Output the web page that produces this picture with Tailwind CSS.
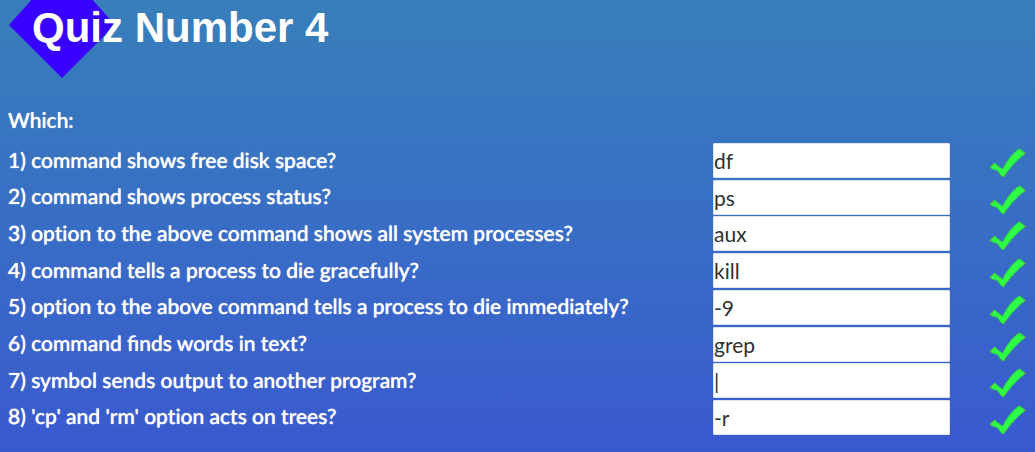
<!DOCTYPE html>
<html lang="en">
<head>
<meta charset="utf-8">
<meta name="viewport" content="width=device-width, initial-scale=1">
<title>Quiz Number 4</title>
<script src="https://cdn.jsdelivr.net/npm/@tailwindcss/browser@4"></script>
</head>
<body class="min-h-screen overflow-x-hidden bg-linear-to-b from-[#387fba] to-[#3a59cf] font-['Lato',sans-serif] text-[21px] leading-7 font-medium text-white">
<svg width="0" height="0" class="absolute" aria-hidden="true">
  <symbol id="check" viewBox="0 0 38 30">
    <path d="M1 19.500 5.500 15 13.500 21.500C18 12.500 23.500 5.500 30.500.8L36.500 5.500C28 11.500 21.500 19 14.500 29L12.500 28 8.500 22.500 2 20.500Z" fill="#2eff46" stroke="#2eff46" stroke-width="1"/>
    <path d="M1 19.500 5.500 15 13.500 21.500C18 12.500 23.500 5.500 30.500.8L36.500 5.500C28 11.500 21.500 19 14.500 29L12.500 28 8.500 22.500 2 20.500Z" fill="none" stroke="#347b60" stroke-width="1" stroke-dasharray="1 1"/>
    <path d="M3 17h1M2 20h1M16 26h1M35 6h1" stroke="#c86b28" stroke-width="1"/>
  </symbol>
</svg>
<header class="relative h-[106px] pl-8 pt-[5px]">
  <svg class="absolute top-0 left-[9px]" width="106" height="78" viewBox="0 0 106 78" aria-hidden="true"><path d="M25-3H81L106 25 53 78 0 25Z" fill="#3800ff"/></svg>
  <h1 class="relative font-['Liberation_Sans',sans-serif] text-[42px] leading-[46px] font-bold">Quiz Number 4</h1>
</header>
<main class="pl-2">
  <p class="mb-[9px] [text-shadow:0_0_1px_white]">Which:</p>
  <form class="flex h-[292px] flex-col justify-between">
    <div class="flex h-[35px] items-center"><label for="q1" class="flex-1 [text-rendering:geometricPrecision] [text-shadow:0_0_1px_white]">1) command shows free disk space?</label><input id="q1" value="df" class="h-[35px] w-[237px] rounded-[1px] border border-[#dce3ee] bg-white text-[#303030] font-normal outline-none"><svg class="mt-[5px] mr-2 ml-[39px] h-[30px] w-[38px]" role="img" aria-label="Correct"><use href="#check"/></svg></div>
    <div class="flex h-[35px] items-center"><label for="q2" class="flex-1 [text-rendering:geometricPrecision] [text-shadow:0_0_1px_white]">2) command shows process status?</label><input id="q2" value="ps" class="h-[35px] w-[237px] rounded-[1px] border border-[#dce3ee] bg-white text-[#303030] font-normal outline-none"><svg class="mt-[5px] mr-2 ml-[39px] h-[30px] w-[38px]" role="img" aria-label="Correct"><use href="#check"/></svg></div>
    <div class="flex h-[35px] items-center"><label for="q3" class="flex-1 [font-variant-ligatures:none] [text-rendering:geometricPrecision] [text-shadow:0_0_1px_white]">3) option to the above command shows all system processes?</label><input id="q3" value="aux" class="h-[35px] w-[237px] rounded-[1px] border border-[#dce3ee] bg-white text-[#303030] font-normal outline-none"><svg class="mt-[5px] mr-2 ml-[39px] h-[30px] w-[38px]" role="img" aria-label="Correct"><use href="#check"/></svg></div>
    <div class="flex h-[35px] items-center"><label for="q4" class="flex-1 [text-rendering:geometricPrecision] [text-shadow:0_0_1px_white]">4) command tells a process to die gracefully?</label><input id="q4" value="kill" class="h-[35px] w-[237px] rounded-[1px] border border-[#dce3ee] bg-white text-[#303030] font-normal outline-none"><svg class="mt-[5px] mr-2 ml-[39px] h-[30px] w-[38px]" role="img" aria-label="Correct"><use href="#check"/></svg></div>
    <div class="flex h-[35px] items-center"><label for="q5" class="flex-1 [font-variant-ligatures:none] [text-rendering:geometricPrecision] [text-shadow:0_0_1px_white]">5) option to the above command tells a process to die immediately?</label><input id="q5" value="-9" class="h-[35px] w-[237px] rounded-[1px] border border-[#dce3ee] bg-white text-[#303030] font-normal outline-none"><svg class="mt-[5px] mr-2 ml-[39px] h-[30px] w-[38px]" role="img" aria-label="Correct"><use href="#check"/></svg></div>
    <div class="flex h-[35px] items-center"><label for="q6" class="flex-1 [text-rendering:geometricPrecision] [text-shadow:0_0_1px_white]">6) command finds words in text?</label><input id="q6" value="grep" class="h-[35px] w-[237px] rounded-[1px] border border-[#dce3ee] bg-white text-[#303030] font-normal outline-none"><svg class="mt-[5px] mr-2 ml-[39px] h-[30px] w-[38px]" role="img" aria-label="Correct"><use href="#check"/></svg></div>
    <div class="flex h-[35px] items-center"><label for="q7" class="flex-1 [text-rendering:geometricPrecision] [text-shadow:0_0_1px_white]">7) symbol sends output to another program?</label><input id="q7" value="|" class="h-[35px] w-[237px] rounded-[1px] border border-[#dce3ee] bg-white text-[#303030] font-normal outline-none"><svg class="mt-[5px] mr-2 ml-[39px] h-[30px] w-[38px]" role="img" aria-label="Correct"><use href="#check"/></svg></div>
    <div class="flex h-[35px] items-center"><label for="q8" class="flex-1 [font-variant-ligatures:none] [text-rendering:geometricPrecision] [text-shadow:0_0_1px_white]">8) 'cp' and 'rm' option acts on trees?</label><input id="q8" value="-r" class="h-[35px] w-[237px] rounded-[1px] border border-[#dce3ee] bg-white text-[#303030] font-normal outline-none"><svg class="mt-[5px] mr-2 ml-[39px] h-[30px] w-[38px]" role="img" aria-label="Correct"><use href="#check"/></svg></div>
  </form>
</main>
</body>
</html>
